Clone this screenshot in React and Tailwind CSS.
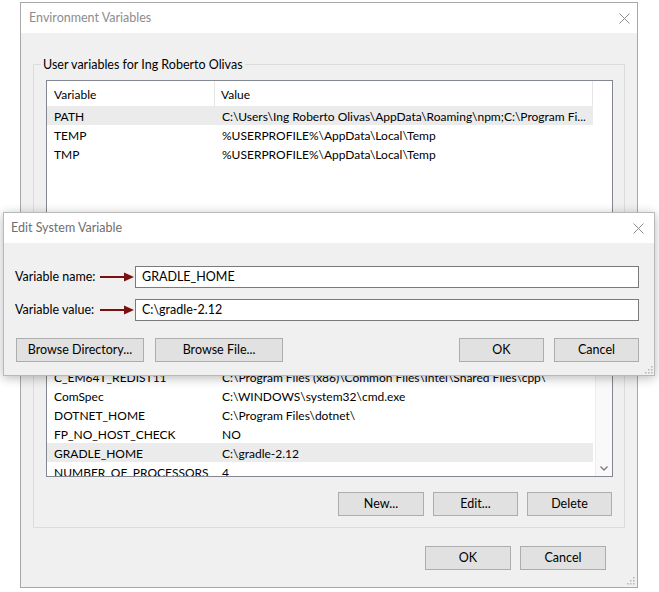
import React from 'react'

const font = { fontFamily: 'Lato, "Noto Sans", sans-serif' }

// Close glyph for title bars
const CloseX = ({ className }) => (
  <svg width="11" height="11" viewBox="0 0 11 11" className={className}>
    <path d="M0.5 0.5 L10.5 10.5 M10.5 0.5 L0.5 10.5" stroke="#8c8c8c" strokeWidth="1" fill="none" />
  </svg>
)

const Arrow = () => (
  <svg width="34" height="10" viewBox="0 0 34 10">
    <path d="M0 5 H26" stroke="#7a1111" strokeWidth="2" />
    <polygon points="24,0.5 34,5 24,9.5" fill="#7a1111" />
  </svg>
)

const Grip = () => (
  <svg width="8" height="8" viewBox="0 0 8 8">
    <rect x="6" y="0" width="1.5" height="1.5" fill="#b5b5b5" />
    <rect x="3" y="3" width="1.5" height="1.5" fill="#b5b5b5" />
    <rect x="6" y="3" width="1.5" height="1.5" fill="#b5b5b5" />
    <rect x="0" y="6" width="1.5" height="1.5" fill="#b5b5b5" />
    <rect x="3" y="6" width="1.5" height="1.5" fill="#b5b5b5" />
    <rect x="6" y="6" width="1.5" height="1.5" fill="#b5b5b5" />
  </svg>
)

const Btn = ({ w, children }) => (
  <div className={`${w} h-[24px] flex items-center justify-center pt-[1px] bg-[#e1e1e1] border border-[#adadad] text-[12.5px] text-black`}>
    {children}
  </div>
)

const Row = ({ name, value, selected }) => (
  <div className={`flex h-[19px] items-center pt-[2px] w-[546px] text-[12px] text-black whitespace-nowrap ${selected ? 'bg-[#ebebeb]' : ''}`}>
    <div className="w-[169px] pl-[7px] overflow-hidden">{name}</div>
    <div className="flex-1 pl-[6px] overflow-hidden">{value}</div>
  </div>
)

const Header = () => (
  <div className="flex h-[25px] items-center w-[546px] text-[12px] text-black border-r border-[#e5e5e5]">
    <div className="w-[168px] h-full flex items-center pt-[2px] pl-[7px] border-r border-[#e5e5e5]">Variable</div>
    <div className="flex-1 pl-[6px] pt-[2px]">Value</div>
  </div>
)

const GroupBox = ({ label, className, children }) => (
  <div className={`relative border border-[#dcdcdc] ${className}`}>
    <span className="absolute -top-[9px] left-[7px] px-[2px] bg-[#f0f0f0] text-[12.5px] text-black leading-[18px]">{label}</span>
    {children}
  </div>
)

const userVars = [
  ['PATH', 'C:\\Users\\Ing Roberto Olivas\\AppData\\Roaming\\npm;C:\\Program Fi...', true],
  ['TEMP', '%USERPROFILE%\\AppData\\Local\\Temp'],
  ['TMP', '%USERPROFILE%\\AppData\\Local\\Temp'],
]

const systemVars = [
  ['ASL.log', 'Destination=file'],
  ['asl.log', 'Destination=file'],
  ['C_EM64T_REDIST11', 'C:\\Program Files (x86)\\Common Files\\Intel\\Shared Files\\cpp\\'],
  ['ComSpec', 'C:\\WINDOWS\\system32\\cmd.exe'],
  ['DOTNET_HOME', 'C:\\Program Files\\dotnet\\'],
  ['FP_NO_HOST_CHECK', 'NO'],
  ['GRADLE_HOME', 'C:\\gradle-2.12', true],
  ['NUMBER_OF_PROCESSORS', '4'],
]

function EditDialog() {
  return (
    <div className="absolute left-[3px] top-[212px] w-[652px] h-[164px] border border-[#b9b9b9] bg-[#f0f0f0] shadow-[0_2px_10px_rgba(0,0,0,0.28)] flex flex-col">
      <div className="h-[30px] bg-white flex items-center justify-between pt-[1px] pl-[7px] pr-[10px]">
        <span className="text-[12.5px] text-[#6f6f6f]">Edit System Variable</span>
        <CloseX />
      </div>
      <div className="flex-1 relative pl-[11px] pr-[15px] pt-[23px]">
        <div className="flex items-center h-[22px]">
          <div className="w-[85px] pt-[1px] text-[12.5px] text-black whitespace-nowrap">Variable name:</div>
          <Arrow />
          <div className="flex-1 ml-[1px] h-[22px] bg-white border border-[#7a7a7a] flex items-center pt-[1px] pl-[6px] text-[12.5px] text-black">GRADLE_HOME</div>
        </div>
        <div className="flex items-center h-[22px] mt-[11px]">
          <div className="w-[85px] pt-[1px] text-[12.5px] text-black whitespace-nowrap">Variable value:</div>
          <Arrow />
          <div className="flex-1 ml-[1px] h-[22px] bg-white border border-[#7a7a7a] flex items-center pt-[1px] pl-[6px] text-[12.5px] text-black">C:\gradle-2.12</div>
        </div>
        <div className="flex items-center mt-[17px] pl-[1px]">
          <Btn w="w-[128px]">Browse Directory...</Btn>
          <div className="ml-[11px]"><Btn w="w-[128px]">Browse File...</Btn></div>
          <div className="ml-auto flex gap-[10px]">
            <Btn w="w-[85px]">OK</Btn>
            <Btn w="w-[85px]">Cancel</Btn>
          </div>
        </div>
        <div className="absolute right-[1px] bottom-[1px]"><Grip /></div>
      </div>
    </div>
  )
}

export default function App() {
  return (
    <div className="relative w-[659px] h-[592px] bg-white overflow-hidden" style={font}>
      <div className="ml-[20px] mt-[2px] w-[618px] h-[586px] border border-[#a8a8a8] bg-[#f0f0f0] flex flex-col">
        <div className="h-[30px] bg-white flex items-center justify-between pt-[1px] pl-[8px] pr-[7px]">
          <span className="text-[12.5px] text-[#8d8d8d]">Environment Variables</span>
          <CloseX />
        </div>
        <div className="flex-1 relative px-[12px] pt-[31px]">
          <GroupBox label="User variables for Ing Roberto Olivas" className="h-[215px] pt-[15px] pl-[12px]">
            <div className="w-[567px] h-[170px] bg-white border border-[#828790]">
              <Header />
              {userVars.map(([n, v, s]) => <Row key={n} name={n} value={v} selected={s} />)}
            </div>
          </GroupBox>

          <GroupBox label="System variables" className="mt-[8px] h-[241px] pt-[15px] pl-[12px]">
            <div className="relative w-[567px] h-[174px] bg-white border border-[#828790] overflow-hidden">
              <Header />
              {systemVars.map(([n, v, s]) => <Row key={n} name={n} value={v} selected={s} />)}
              <div className="absolute right-0 top-0 bottom-0 w-[17px] bg-[#f9f9f9] border-l border-[#ededed] flex items-end justify-center pb-[5px]">
                <svg width="8" height="5" viewBox="0 0 8 5">
                  <path d="M0.5 0.5 L4 4 L7.5 0.5" stroke="#7d7d7d" strokeWidth="1.4" fill="none" />
                </svg>
              </div>
            </div>
            <div className="flex justify-end gap-[9px] mt-[15px] pr-[12px]">
              <Btn w="w-[86px]">New...</Btn>
              <Btn w="w-[85px]">Edit...</Btn>
              <Btn w="w-[85px]">Delete</Btn>
            </div>
          </GroupBox>

          <div className="flex justify-end gap-[9px] mt-[18px] pr-[19px]">
            <Btn w="w-[86px]">OK</Btn>
            <Btn w="w-[86px]">Cancel</Btn>
          </div>
          <div className="absolute right-[2px] bottom-[2px]"><Grip /></div>
        </div>
      </div>
      <EditDialog />
    </div>
  )
}
